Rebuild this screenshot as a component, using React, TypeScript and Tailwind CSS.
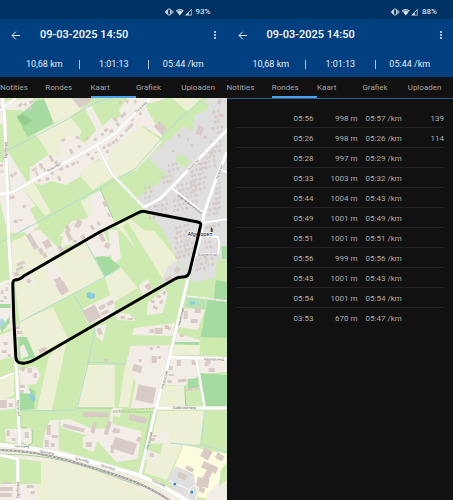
interface Lap {
  time: string;
  distance: string;
  pace: string;
  heartRate?: number;
}

const laps: Lap[] = [
  { time: "05:56", distance: "998 m", pace: "05:57 /km", heartRate: 139 },
  { time: "05:26", distance: "998 m", pace: "05:26 /km", heartRate: 114 },
  { time: "05:28", distance: "997 m", pace: "05:29 /km" },
  { time: "05:33", distance: "1003 m", pace: "05:32 /km" },
  { time: "05:44", distance: "1004 m", pace: "05:43 /km" },
  { time: "05:49", distance: "1001 m", pace: "05:49 /km" },
  { time: "05:51", distance: "1001 m", pace: "05:51 /km" },
  { time: "05:56", distance: "999 m", pace: "05:56 /km" },
  { time: "05:43", distance: "1001 m", pace: "05:43 /km" },
  { time: "05:54", distance: "1001 m", pace: "05:54 /km" },
  { time: "03:53", distance: "670 m", pace: "05:47 /km" },
];

const tabs = ["Notities", "Rondes", "Kaart", "Grafiek", "Uploaden"];
const stats = ["10,68 km", "1:01:13", "05:44 /km"];

const FARM = "#eef0d5";
const HOUSES = "#f2ede6";
const GRASS = "#cdebb0";
const WOOD = "#a5dba0";
const TOWN = "#e0dfdf";

// [fill, points], painted in order on top of the grass
const areas: [string, string][] = [
  [HOUSES, "0,98 4,98 5,124 0,124"],
  [HOUSES, "0,162 6,162 8,233 0,200"],
  [HOUSES, "6,101 33,98 36,111 28,116 22,110 6,110"],
  [WOOD, "17,117 27,109 36,101 46,99 54,123 28,137"],
  ["#93cc8d", "17,117 23,114 33,121 24,126"],
  [FARM, "44,98 72,98 80,110 71,116 54,123"],
  [FARM, "36,134 70,116 82,131 78,140 62,141 66,160 55,164"],
  [HOUSES, "72,98 93,98 80,110"],
  ["#d9cdc8", "72,98 93,98 89,103 80,108"],
  [HOUSES, "85,108 91,105 103,126 97,131"],
  [HOUSES, "30,168 48,155 60,156 60,142 68,137 75,136 85,143 97,130 115,116 128,98 168,98 145,105 164,139 143,126 118,146 113,155 108,164 99,159 84,168 80,177 66,185 52,181 43,185 30,181"],
  [GRASS, "113,98 116,98 121,116 113,121"],
  [HOUSES, "7,150 27,182 11,191"],
  [FARM, "22,188 33,181 51,212 46,216"],
  [HOUSES, "9,195 22,188 36,206 30,209 39,226 31,232 9,233"],
  [FARM, "83,168 99,160 104,161 115,176 93,190 81,177"],
  [FARM, "81,201 88,198 102,220 91,223"],
  [HOUSES, "88,197 101,190 111,213 115,224 103,232 92,236 60,236 72,221 85,219 94,214"],
  [FARM, "113,148 118,145 141,126 163,141 148,158 136,170 116,178 108,164"],
  [FARM, "173,98 201,98 188,113"],
  [GRASS, "145,105 168,98 193,114 173,128"],
  [TOWN, "148,158 193,118 208,98 227,98 227,260 217,260 216,277 194,283 188,271 178,261 164,231 144,208 138,198 168,176"],
  [GRASS, "190,121 203,102 209,104 208,110 195,115 193,131 183,125"],
  [GRASS, "174,159 181,154 192,161 185,168"],
  [FARM, "116,226 131,219 144,230 155,231 178,260 167,284 155,275 127,237"],
  [GRASS, "123,226 128,222 165,282 157,285"],
  [HOUSES, "108,230 118,230 121,258 113,265"],
  [WOOD, "95,255 109,257 121,267 105,277"],
  [HOUSES, "65,228 103,229 114,255 95,257 86,242 67,245 60,251"],
  [FARM, "12,242 32,232 52,258 24,275 13,280"],
  [HOUSES, "25,232 40,230 63,252 50,259"],
  [FARM, "15,282 86,243 105,277 20,322"],
  [HOUSES, "43,267 55,261 70,290 60,296"],
  [HOUSES, "24,278 31,275 36,282 28,287"],
  [FARM, "20,322 53,307 68,338 30,361"],
  [FARM, "105,277 121,267 138,288 113,303"],
  [HOUSES, "0,283 12,285 14,327 0,332"],
  [WOOD, "0,304 11,304 11,308 0,308"],
  [WOOD, "0,327 5,323 10,316 10,323 2,332"],
  ["#a6d5e4", "1,318 5,321 4,327 0,325"],
  [HOUSES, "0,335 15,330 16,356 0,360"],
  [FARM, "0,378 14,373 14,395 0,401"],
  [HOUSES, "14,325 22,326 22,337 15,337"],
  [WOOD, "19,337 27,337 36,358 19,360"],
  [HOUSES, "20,347 24,344 29,356 21,359"],
  [FARM, "49,357 68,336 62,365 52,410 37,410"],
  [FARM, "87,365 115,365 115,408 77,408"],
  [HOUSES, "82,309 115,293 115,314 88,324"],
  [HOUSES, "95,327 107,324 103,341 97,337"],
  [TOWN, "161,283 168,267 176,261 188,273 180,280"],
  [HOUSES, "139,285 148,279 153,291 142,294"],
  [HOUSES, "148,303 165,288 168,293 163,313 147,315"],
  [HOUSES, "113,312 130,314 136,321 118,320"],
  [WOOD, "216,280 227,282 227,338 201,337 208,298 214,299"],
  [WOOD, "222,246 227,246 227,259 222,259"],
  ["#b5e3b5", "187,297 206,298 205,309 185,307"],
  [HOUSES, "182,308 205,310 198,330 178,327"],
  [HOUSES, "134,328 175,323 173,336 133,335"],
  [HOUSES, "131,346 170,345 168,365 163,386 156,408 131,408 136,382 126,365"],
  [HOUSES, "177,333 200,340 199,343 176,342"],
  [WOOD, "175,342 199,342 199,345 175,344"],
  [FARM, "174,345 200,345 200,355 172,355"],
  [HOUSES, "172,357 200,356 227,357 227,372 200,374 187,386 165,385"],
  [FARM, "163,386 186,386 185,407 158,407"],
  [FARM, "125,366 136,366 129,407 119,407"],
  [GRASS, "185,385 199,378 204,407 186,407"],
  [WOOD, "188,379 198,378 199,388 188,388"],
  [WOOD, "200,373 227,375 227,407 204,407"],
  [FARM, "158,411 205,411 201,444 183,446 167,480 145,473"],
  [GRASS, "148,444 163,443 161,455 148,452"],
  [HOUSES, "152,434 170,431 170,442 152,444"],
  [HOUSES, "148,450 160,454 157,461 146,460"],
  ["#fdfcdf", "184,445 227,454 227,473 212,500 186,494 169,480"],
  [TOWN, "176,466 194,474 198,500 186,500 167,481"],
  [HOUSES, "207,494 227,475 227,500 207,500"],
  [GRASS, "221,470 227,462 227,480 219,487"],
  [HOUSES, "60,420 70,419 93,429 108,428 112,408 122,408 119,424 142,430 138,459 117,462 109,454 95,438 62,428"],
  [GRASS, "113,415 146,425 146,432 113,424"],
  [HOUSES, "19,370 36,366 41,375 36,384 21,385"],
  [WOOD, "20,393 26,386 36,391 34,409 20,410"],
  [HOUSES, "18,385 28,385 31,394 21,393"],
  [HOUSES, "0,399 15,398 15,409 0,410"],
  [HOUSES, "6,429 17,429 18,443 6,442"],
  [HOUSES, "21,429 31,428 32,442 26,446 21,443"],
  [HOUSES, "44,437 50,420 59,420 59,451 43,448"],
  [HOUSES, "83,437 100,433 94,452 83,448"],
  ["#f1eee0", "0,444 60,450 115,466 160,488 190,500 150,500 115,480 60,464 0,456"],
  [FARM, "41,461 80,466 115,479 160,500 36,500 36,484 41,484"],
  [HOUSES, "0,484 37,484 37,500 0,500"],
];

const streams = [
  "M0 154 L8 150 L38 135 L70 118 L95 103 L115 97",
  "M20 232 L70 205 L115 180 L135 169 L180 118 L205 98",
  "M0 243 L30 226",
  "M20 322 L73 294 L105 277 L120 268",
  "M86 242 L105 277",
  "M73 293 L95 330 L88 365 L77 410 L20 411",
  "M88 362 L125 364",
  "M205 411 L201 444 L227 452",
  "M157 411 L152 432 M170 443 L201 446",
];

const hedges = [
  "M100 188 L113 218",
  "M21 415 L21 427 L27 428 M22 442 Q29 449 33 442 V430",
  "M78 408 H113 M113 412 H155 M151 414 L144 452",
  "M0 454 Q50 454 90 468 T140 486",
  "M185 386 L186 406 L202 407",
];

const roads: { d: string; w: number }[] = [
  { d: "M3 98 L5 120 L6 150 L8 200 L9 240 L12 285 L14 330 L17 375 L20 445", w: 3 },
  { d: "M0 110 Q4 109 7 105 L16 98", w: 2 },
  { d: "M0 194 L13 192 L50 171 L97 145 L115 134 L143 106 L151 98", w: 3 },
  { d: "M97 145 L112 174 L143 206", w: 2 },
  { d: "M143 208 L160 199 L172 187 L227 130", w: 3 },
  { d: "M227 152 L216 180 L204 214 L203 223 L200 240 L189 275 L168 365 L156 408 L140 476", w: 3 },
  { d: "M172 188 L204 213", w: 2 },
  { d: "M203 223 L227 219 M221 170 L227 172", w: 2 },
  { d: "M202 235 L218 237 Q221 245 218 254 L196 255", w: 2 },
  { d: "M0 285 L5 282 L12 281", w: 2 },
  { d: "M0 379 L14 373", w: 2 },
  { d: "M170 357 L227 359", w: 3 },
  { d: "M196 357 L200 378 L205 408", w: 2 },
  { d: "M156 408 H227", w: 3 },
  { d: "M187 296 L227 301", w: 1 },
  { d: "M0 455 L18 459 V500", w: 3 },
  { d: "M0 445 Q35 447 77 458 T135 474 T190 502", w: 4 },
  { d: "M170 481 L190 490 L187 497 M190 490 Q193 482 199 488 L196 499", w: 1 },
];

// [x, y, width, height, rotation]
const buildings: [number, number, number, number, number][] = [
  [19, 103, 3, 4, 60], [24, 103, 3, 3, 30], [30, 100, 3, 4, 60], [29, 107, 4, 3, 60],
  [0, 107, 2, 3, 0], [0, 164, 3, 3, 0], [1, 170, 2, 3, 0],
  [62, 138, 3, 4, 60], [69, 150, 5, 3, 60], [78, 145, 3, 3, 60], [76, 136, 3, 3, 0],
  [50, 155, 3, 7, -25], [55, 161, 3, 4, -25], [33, 167, 3, 5, 60], [40, 163, 3, 6, -20],
  [36, 171, 2, 5, -20], [46, 177, 3, 4, 60], [51, 172, 3, 3, 60], [58, 176, 3, 5, -20],
  [38, 179, 3, 3, 60], [44, 168, 2, 5, -20], [60, 167, 3, 4, 60], [66, 165, 3, 3, 60],
  [72, 162, 3, 4, 60], [77, 161, 2, 3, 60], [87, 153, 3, 3, 60], [91, 157, 3, 3, 60],
  [95, 151, 2, 3, 60], [86, 137, 3, 3, 60], [94, 138, 3, 3, 60], [101, 133, 3, 3, 60],
  [105, 128, 3, 4, 60], [110, 129, 3, 4, 60], [103, 146, 3, 3, 60], [108, 143, 3, 4, 60],
  [112, 141, 3, 3, 60], [106, 150, 3, 3, 60], [113, 118, 5, 3, 45], [116, 123, 4, 3, 45],
  [122, 112, 3, 6, 45], [129, 123, 3, 7, 45], [131, 118, 3, 3, 45], [139, 112, 3, 3, 45],
  [119, 101, 3, 3, 45], [126, 100, 3, 3, 45], [134, 100, 3, 3, 45], [115, 139, 4, 3, 45],
  [120, 134, 3, 3, 45], [125, 129, 3, 3, 45], [155, 124, 12, 8, 45],
  [10, 174, 4, 3, 30], [14, 172, 3, 3, 30], [9, 196, 6, 3, -20], [14, 220, 4, 3, 0], [19, 219, 4, 2, 0], [23, 205, 3, 3, 0],
  [103, 202, 5, 4, 60], [107, 214, 4, 2, 60], [76, 220, 5, 8, 30], [66, 225, 4, 7, -25], [90, 226, 5, 3, 60], [97, 222, 4, 3, 60],
  [30, 233, 5, 17, -30], [44, 240, 7, 8, -30], [39, 248, 4, 6, -30], [43, 253, 4, 5, -30],
  [67, 230, 4, 11, -25], [73, 240, 4, 3, 0], [81, 235, 4, 4, 60], [100, 232, 4, 10, -25], [105, 243, 5, 5, 30], [59, 246, 4, 6, -30],
  [17, 262, 8, 3, -25], [16, 267, 8, 3, -25], [14, 272, 5, 4, -25], [27, 279, 4, 4, 30],
  [55, 278, 7, 5, -30], [58, 282, 9, 12, -30], [85, 307, 14, 14, -28], [99, 305, 7, 4, -28], [107, 301, 7, 4, -28], [101, 311, 8, 3, -28],
  [1, 290, 3, 4, 0], [6, 287, 2, 4, 0], [4, 296, 3, 3, 0], [1, 300, 3, 2, 0], [17, 331, 5, 3, 0], [16, 326, 4, 3, 0],
  [98, 328, 4, 7, -20], [4, 342, 4, 3, 0], [2, 350, 5, 3, 0], [8, 354, 3, 3, 0], [39, 348, 8, 4, -20], [104, 359, 4, 3, 0],
  [175, 267, 5, 6, 30], [165, 277, 7, 3, -30], [146, 284, 5, 6, -30], [151, 300, 4, 3, 30], [157, 295, 4, 3, 30], [160, 300, 3, 4, 30], [153, 306, 5, 3, 30], [163, 291, 3, 4, 30],
  [121, 316, 4, 3, 0], [128, 318, 5, 2, 0], [116, 311, 4, 3, 0], [155, 328, 8, 6, 0], [150, 329, 4, 4, 0], [165, 325, 4, 4, 0], [168, 327, 3, 3, 0],
  [184, 311, 4, 8, 0], [195, 308, 6, 5, 0], [191, 319, 7, 4, 0], [180, 334, 4, 3, 0],
  [152, 356, 5, 7, 0], [158, 356, 3, 3, 0], [150, 347, 3, 3, 0], [157, 346, 3, 2, 0], [139, 359, 3, 3, 0], [133, 365, 9, 7, 20], [137, 386, 18, 16, 12],
  [168, 366, 5, 4, 0], [177, 360, 4, 6, 0], [192, 360, 4, 5, 0], [205, 362, 4, 4, 0], [209, 368, 6, 4, 0], [206, 360, 5, 4, 0], [178, 379, 9, 3, -5], [168, 380, 4, 3, 0], [187, 388, 6, 3, 0], [195, 387, 4, 3, 0], [169, 374, 5, 2, 0],
  [129, 416, 18, 6, 12], [113, 440, 23, 12, 18], [114, 429, 6, 4, 0], [137, 437, 4, 5, 30],
  [21, 367, 4, 4, 30], [28, 368, 4, 5, 0], [34, 373, 3, 5, 0], [19, 385, 6, 3, 0], [20, 390, 4, 3, 0],
  [0, 400, 7, 8, 0], [9, 403, 4, 4, 0], [7, 430, 3, 6, 0], [12, 438, 4, 3, 0], [25, 432, 4, 6, 0],
  [47, 425, 4, 10, 0], [52, 435, 6, 3, 0], [45, 440, 4, 7, 0], [51, 443, 4, 4, 0], [63, 426, 22, 4, 14], [83, 412, 26, 5, 2], [92, 422, 4, 11, 15], [106, 421, 4, 14, 18], [86, 442, 6, 5, 0], [113, 428, 4, 5, 20], [111, 445, 3, 8, 0],
  [0, 487, 13, 4, 0], [0, 493, 12, 4, 0], [3, 482, 9, 2, 0], [27, 485, 7, 3, 0], [31, 491, 4, 3, 0],
  [153, 435, 4, 2, 0], [150, 438, 5, 3, 0], [150, 453, 4, 4, 0],
  [202, 449, 9, 10, 30], [216, 454, 8, 6, 30], [202, 464, 16, 7, 25], [197, 478, 12, 9, 10], [203, 470, 6, 16, 30], [178, 473, 9, 6, 25], [186, 467, 8, 4, 25], [197, 487, 8, 5, 20],
  [197, 126, 6, 9, 20], [218, 99, 4, 5, 20], [219, 114, 5, 3, 30], [211, 127, 4, 3, 0], [204, 136, 3, 3, 0], [172, 150, 3, 2, 0], [178, 134, 3, 3, 45], [191, 144, 3, 3, 0], [187, 138, 2, 3, 0],
];

// street blocks of the village: [x, y, columns, rows]
const blocks: [number, number, number, number][] = [
  [168, 164, 3, 2], [162, 176, 3, 2], [145, 186, 2, 3], [149, 201, 5, 4], [178, 184, 5, 3],
  [191, 164, 4, 6], [201, 152, 4, 4], [211, 141, 3, 3], [174, 199, 4, 3], [176, 226, 4, 7],
  [191, 195, 2, 2], [215, 182, 2, 6], [209, 203, 3, 3], [206, 226, 4, 1], [205, 241, 2, 2],
  [196, 258, 3, 3], [207, 258, 2, 2], [214, 110, 2, 3], [217, 126, 2, 2], [184, 243, 3, 3],
];

const streets: { name: string; x: number; y: number; r: number }[] = [
  { name: "Kapelstraat", x: 7, y: 158, r: -90 },
  { name: "Beukenhof", x: 48, y: 172, r: -28 },
  { name: "Dorpsweg", x: 137, y: 113, r: -45 },
  { name: "Dorpstraat", x: 189, y: 171, r: -47 },
  { name: "Ruys de Beerenstraat", x: 178, y: 196, r: 38 },
  { name: "Kerkstraat", x: 218, y: 179, r: -70 },
  { name: "Kloosterstraat", x: 198, y: 256, r: -2 },
  { name: "Heerenstraat", x: 180, y: 326, r: -77 },
  { name: "Schoolderweg", x: 204, y: 360, r: 1 },
  { name: "Heerenstraat", x: 163, y: 389, r: -75 },
  { name: "Zuidbroekerweg", x: 173, y: 409, r: 0 },
  { name: "Kapelstraat", x: 17, y: 400, r: 86 },
  { name: "Spoorweg", x: 15, y: 447, r: 4 },
  { name: "Spoorweg", x: 40, y: 452, r: 10 },
  { name: "Spoorweg", x: 75, y: 459, r: 14 },
  { name: "Spoorweg", x: 101, y: 466, r: 16 },
  { name: "Spoorweg", x: 152, y: 481, r: 25 },
  { name: "Kapelstraat", x: 19, y: 498, r: -90 },
  { name: "Heerenstraat", x: 148, y: 450, r: -76 },
];

const RAIL = "M0 450 Q35 451 67 460 T125 478 T172 502";
const ROUTE =
  "M201 225 Q202 223 198 222 L147 212 Q143 210 138 213 L100 232 L24 276 Q20 280 15 280 Q13 281 13 284 L14 318 L16 356 Q16 363 22 363 Q27 364 36 359 L112 315 L175 279 Q178 277 183 277 Q189 277 190 271 L197 242 Z";

function RouteMap() {
  return (
    <svg
      viewBox="0 98 227 402"
      preserveAspectRatio="xMidYMin slice"
      role="img"
      aria-label="Kaart"
      className="block w-full flex-1 bg-[#cdebb0]"
    >
      {areas.map(([fill, points], i) => (
        <polygon key={i} points={points} fill={fill} />
      ))}
      <g fill="none" strokeWidth="1">
        {hedges.map((d) => (
          <path key={d} d={d} stroke="#9fd39a" />
        ))}
        {streams.map((d) => (
          <path key={d} d={d} stroke="#b5dcd6" />
        ))}
      </g>
      <g fill="#8cc8e0">
        <path d="M87 293 l3 -1 l2 1 l3 1 l0 4 l-4 1 l-4 -2 z" />
        <path d="M28 395 q3 -3 6 0 l2 5 l-4 1 l-1 -3 z" />
        <path d="M190 301 l3 1 l2 -1 l0 3 l-4 1 z" />
      </g>
      <g fill="#d8cbc5">
        {buildings.map(([x, y, w, h, r], i) => (
          <rect key={i} x={x} y={y} width={w} height={h} transform={`rotate(${r} ${x + w / 2} ${y + h / 2})`} />
        ))}
      </g>
      <g fill="#d6ccc8">
        {blocks.flatMap(([x, y, cols, rows], b) =>
          Array.from({ length: cols * rows }, (_, i) => {
            const bx = x + (i % cols) * 4 + (Math.floor(i / cols) % 2);
            const by = y + Math.floor(i / cols) * 5 - (i % cols);
            return (
              <rect
                key={`${b}-${i}`}
                x={bx}
                y={by}
                width={2 + ((i + b) % 2)}
                height={3}
                transform={`rotate(${(b * 7 + i * 11) % 40} ${bx} ${by})`}
              />
            );
          })
        )}
      </g>
      <g fill="none" strokeLinejoin="round">
        {roads.map(({ d, w }) => (
          <path key={d} d={d} stroke="#dedad5" strokeWidth={w + 0.5} />
        ))}
        {roads.map(({ d, w }) => (
          <path key={d} d={d} stroke="#ffffff" strokeWidth={w} />
        ))}
        <path d="M113 411 L156 408" stroke="#c5bf9d" strokeDasharray="2 1" />
        <path d={RAIL} stroke="#999999" strokeWidth="2" />
        <path d={RAIL} stroke="#e5e5e5" strokeWidth="1" strokeDasharray="2 2" />
      </g>
      <g className="font-['Noto_Sans',sans-serif]" fontSize="3" fill="#55504c">
        {streets.map(({ name, x, y, r }) => (
          <text key={`${name}-${x}`} x={x} y={y} transform={`rotate(${r} ${x} ${y})`}>
            {name}
          </text>
        ))}
      </g>
      <g fill="#3b93d0">
        <circle cx="175" cy="484" r="1.5" />
        <circle cx="192" cy="492" r="1.5" />
      </g>
      <path d="M211 232 V229 L212 227 L213 229 V232 Z" fill="#4d4038" />
      <text
        x="188"
        y="236"
        fontSize="5"
        fill="#111111"
        stroke="#ffffff"
        strokeWidth="1"
        paintOrder="stroke"
        className="font-['Noto_Sans',sans-serif] font-medium"
      >
        Afgelopen
      </text>
      <path d={ROUTE} fill="none" stroke="#000000" strokeWidth="3" strokeLinejoin="round" />
    </svg>
  );
}

function StatusBar({ battery }: { battery: string }) {
  return (
    <div className="flex h-[19px] items-center justify-end bg-[#003263] pt-1 pr-4 text-[#d5e0ea]">
      <svg viewBox="0 0 27 8" className="mr-1 h-2 w-[27px]" fill="currentColor" aria-hidden="true">
        <rect x="2.6" y="1.1" width="3" height="5.8" rx="0.6" fill="none" stroke="currentColor" />
        <path d="M1 2 H1.9 V6 H1 Z M0 3 H0.7 V5 H0 Z M6.4 2 H7.3 V6 H6.4 Z M7.6 3 H8.3 V5 H7.6 Z" />
        <path d="M10.8 2.6 Q14.8 -0.8 18.8 2.6 L14.8 7.4 Z" />
        <path d="M12.2 3.2 Q14.8 1.4 17.4 3.2" fill="none" stroke="#003263" strokeWidth="0.6" />
        <path d="M20 7.4 L26.6 0.8 V7.4 Z M23.8 4.6 V6.7 H25.9 V2.5 Z" fillRule="evenodd" />
      </svg>
      <span className="text-[8px] leading-[10px] font-medium">{battery}</span>
    </div>
  );
}

function Header() {
  return (
    <header className="bg-[#004080] text-[#e6edf4]">
      <div className="flex h-8 items-center pl-[11px] pr-2">
        <button type="button" aria-label="Terug" className="mr-5">
          <svg viewBox="0 0 9 9" className="h-[9px] w-[9px]" fill="none" stroke="currentColor" strokeWidth="1">
            <path d="M9 4.5 H1 M4.8 0.7 L1 4.5 L4.8 8.3" />
          </svg>
        </button>
        <h1 className="flex-1 text-[11px] leading-4 font-medium text-white">09-03-2025 14:50</h1>
        <button type="button" aria-label="Meer opties">
          <svg viewBox="0 0 8 10" className="h-[10px] w-2" fill="currentColor">
            <circle cx="4" cy="2" r="1" />
            <circle cx="4" cy="5" r="1" />
            <circle cx="4" cy="8" r="1" />
          </svg>
        </button>
      </div>
      <div className="grid h-[26px] grid-cols-3 items-center pl-[10px] pr-2 text-center text-[9px] leading-[9px]">
        {stats.map((stat) => (
          <span key={stat} className="border-r border-[#b3c6d9] last:border-transparent">
            {stat}
          </span>
        ))}
      </div>
    </header>
  );
}

function Tabs({ active }: { active: string }) {
  return (
    <div role="tablist" className="grid h-[21px] grid-cols-5 bg-[#111111] text-[8px] text-[#a3a3a3]">
      {tabs.map((tab) => (
        <button
          key={tab}
          type="button"
          role="tab"
          aria-selected={tab === active}
          className={`border-b-3 pt-[3px] text-left leading-4 ${
            tab === active ? "border-[#4aa3ea]" : "border-transparent"
          }`}
        >
          {tab}
        </button>
      ))}
    </div>
  );
}

function LapTable() {
  return (
    <div className="flex-1 border-t border-[#2a6090] px-[9px] pt-2">
      <table className="w-full table-fixed text-[8px] leading-[10px] text-[#adadad]">
        <tbody>
          {laps.map((lap, i) => (
            <tr key={i} className="h-5 border-b border-[#222222] last:border-0">
              <td className="w-[78px] pt-1 text-right">{lap.time}</td>
              <td className="w-11 pt-1 text-right">{lap.distance}</td>
              <td className="w-12 pt-1 pl-2">{lap.pace}</td>
              <td className="pt-1 text-right">{lap.heartRate}</td>
            </tr>
          ))}
        </tbody>
      </table>
    </div>
  );
}

export default function App() {
  return (
    <main className="grid min-h-screen grid-cols-2 bg-[#111111] font-[Roboto,sans-serif]">
      <section className="flex min-w-0 flex-col">
        <StatusBar battery="93%" />
        <Header />
        <Tabs active="Kaart" />
        <RouteMap />
      </section>
      <section className="flex min-w-0 flex-col">
        <StatusBar battery="88%" />
        <Header />
        <Tabs active="Rondes" />
        <LapTable />
      </section>
    </main>
  );
}
